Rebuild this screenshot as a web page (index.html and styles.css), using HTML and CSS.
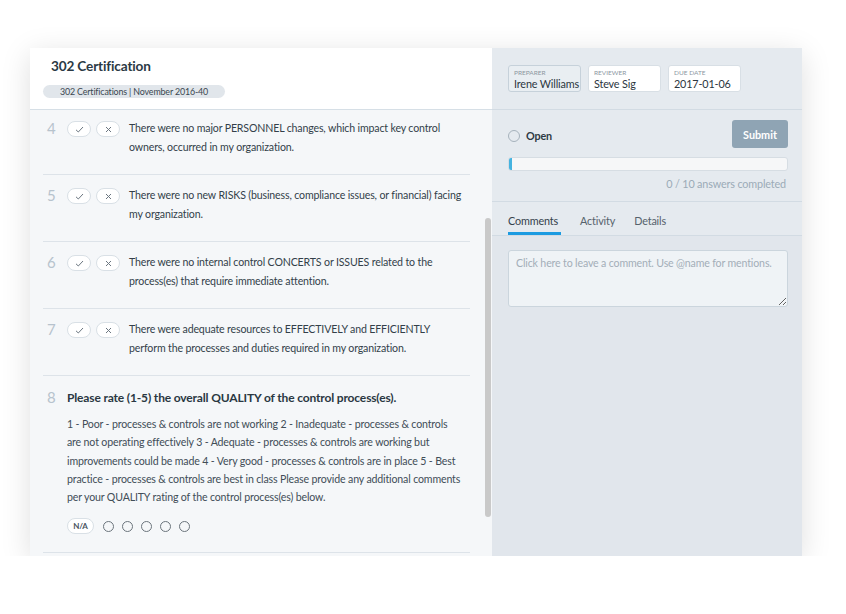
FILE: index.html
```html
<!DOCTYPE html>
<html lang="en">
<head>
  <meta charset="UTF-8" />
  <title>302 Certification</title>
  <link rel="stylesheet" href="styles.css">
</head>
<body>
  <div class="card">
    <div class="survey">
      <div class="survey-head">
        <h1>302 Certification</h1>
        <span class="chip">302 Certifications | November 2016-40</span>
      </div>
      <div class="questions">
        <div class="q first">
          <span class="num">4</span>
          <span class="yesno">
            <span class="pill"><svg width="9" height="7" viewBox="0 0 9 7"><path d="M1 3.8 L3.3 6 L8 1" fill="none" stroke="#6b7680" stroke-width="1"/></svg></span>
            <span class="pill"><svg width="7" height="7" viewBox="0 0 7 7"><path d="M1 1 L6 6 M6 1 L1 6" fill="none" stroke="#6b7680" stroke-width="1"/></svg></span>
          </span>
          <p>There were no major PERSONNEL changes, which impact key control owners, occurred in my organization.</p>
        </div>
        <div class="q">
          <span class="num">5</span>
          <span class="yesno">
            <span class="pill"><svg width="9" height="7" viewBox="0 0 9 7"><path d="M1 3.8 L3.3 6 L8 1" fill="none" stroke="#6b7680" stroke-width="1"/></svg></span>
            <span class="pill"><svg width="7" height="7" viewBox="0 0 7 7"><path d="M1 1 L6 6 M6 1 L1 6" fill="none" stroke="#6b7680" stroke-width="1"/></svg></span>
          </span>
          <p>There were no new RISKS (business, compliance issues, or financial) facing my organization.</p>
        </div>
        <div class="q">
          <span class="num">6</span>
          <span class="yesno">
            <span class="pill"><svg width="9" height="7" viewBox="0 0 9 7"><path d="M1 3.8 L3.3 6 L8 1" fill="none" stroke="#6b7680" stroke-width="1"/></svg></span>
            <span class="pill"><svg width="7" height="7" viewBox="0 0 7 7"><path d="M1 1 L6 6 M6 1 L1 6" fill="none" stroke="#6b7680" stroke-width="1"/></svg></span>
          </span>
          <p>There were no internal control CONCERTS or ISSUES related to the process(es) that require immediate attention.</p>
        </div>
        <div class="q">
          <span class="num">7</span>
          <span class="yesno">
            <span class="pill"><svg width="9" height="7" viewBox="0 0 9 7"><path d="M1 3.8 L3.3 6 L8 1" fill="none" stroke="#6b7680" stroke-width="1"/></svg></span>
            <span class="pill"><svg width="7" height="7" viewBox="0 0 7 7"><path d="M1 1 L6 6 M6 1 L1 6" fill="none" stroke="#6b7680" stroke-width="1"/></svg></span>
          </span>
          <p>There were adequate resources to EFFECTIVELY and EFFICIENTLY perform the processes and duties required in my organization.</p>
        </div>
        <div class="q rate">
          <span class="num">8</span>
          <div class="rate-body">
            <h2>Please rate (1-5) the overall QUALITY of the control process(es).</h2>
            <p>1 - Poor - processes &amp; controls are not working 2 - Inadequate - processes &amp; controls are not operating effectively 3 - Adequate - processes &amp; controls are working but improvements could be made 4 - Very good - processes &amp; controls are in place 5 - Best practice - processes &amp; controls are best in class Please provide any additional comments per your QUALITY rating of the control process(es) below.</p>
            <div class="scale">
              <span class="na">N/A</span>
              <span class="dot"></span>
              <span class="dot"></span>
              <span class="dot"></span>
              <span class="dot"></span>
              <span class="dot"></span>
            </div>
          </div>
        </div>
        <div class="thumb"></div>
      </div>
    </div>

    <div class="side">
      <div class="people">
        <div class="field active"><span class="label">Preparer</span><span class="value">Irene Williams</span></div>
        <div class="field"><span class="label">Reviewer</span><span class="value">Steve Sig</span></div>
        <div class="field"><span class="label">Due Date</span><span class="value">2017-01-06</span></div>
      </div>
      <div class="status">
        <div class="status-row">
          <span class="open"><span class="radio"></span>Open</span>
          <button class="submit">Submit</button>
        </div>
        <div class="progress"><span class="bar"></span></div>
        <div class="count">0 / 10 answers completed</div>
      </div>
      <div class="tabs">
        <span class="tab current">Comments</span>
        <span class="tab">Activity</span>
        <span class="tab">Details</span>
      </div>
      <div class="comments">
        <textarea class="comment-box" placeholder="Click here to leave a comment. Use @name for mentions."></textarea>
      </div>
    </div>
  </div>
</body>
</html>
```

FILE: styles.css
```css
body {
  margin: 0;
  background: #fff;
  font-family: Lato, "Open Sans", sans-serif;
  color: #34414c;
  letter-spacing: -0.15px;
}
.card {
  display: flex;
  width: 772px;
  height: 508px;
  margin: 48px 0 0 30px;
  box-shadow: 0 6px 28px rgba(0, 0, 0, 0.13);
  overflow: hidden;
}

/* left: questions */
.survey {
  width: 462px;
  display: flex;
  flex-direction: column;
  background: #f5f7f9;
}
.survey-head {
  height: 61px;
  background: #fff;
  border-bottom: 1px solid #d6dfe6;
  padding: 0 0 0 13px;
}
.survey-head h1 {
  margin: 9px 0 0 8px;
  font-size: 13.6px;
  font-weight: 700;
  color: #2b3944;
  line-height: 18px;
}
.chip {
  display: inline-block;
  margin-top: 10px;
  height: 13px;
  line-height: 13px;
  width: 182px;
  text-align: center;
  border-radius: 7px;
  background: #e1e6eb;
  font-size: 8.9px;
  color: #3a4650;
}
.questions {
  position: relative;
  flex: 1;
  overflow: hidden;
}
.q {
  display: flex;
  align-items: flex-start;
  margin: 0 22px 0 13px;
  padding: 11px 0 18px;
  border-bottom: 1px solid #dde3e9;
}
.q.first {
  padding-top: 9px;
}
.num {
  width: 24px;
  padding-left: 4px;
  box-sizing: border-box;
  font-size: 15px;
  line-height: 18px;
  letter-spacing: 0;
  color: #b7c3cd;
}
.yesno {
  display: flex;
  gap: 5px;
  margin: 2px 9px 0 0;
}
.pill {
  display: flex;
  align-items: center;
  justify-content: center;
  width: 22px;
  height: 14px;
  border: 1px solid #d9e0e6;
  border-radius: 8px;
  background: #fff;
}
.q p {
  flex: 1;
  margin: 0;
  padding-right: 7px;
  font-size: 10.6px;
  line-height: 18.5px;
  color: #333f49;
}
.q.rate {
  padding: 12px 0 18px;
}
.rate .num {
  line-height: 19px;
}
.rate-body {
  flex: 1;
}
.rate-body h2 {
  margin: 0;
  font-size: 12px;
  line-height: 19px;
  font-weight: 700;
  color: #2a3842;
}
.rate-body p {
  margin: 8px 0 0;
  font-size: 10.6px;
  line-height: 18.3px;
  color: #414d57;
}
.scale {
  display: flex;
  align-items: center;
  gap: 8px;
  margin-top: 12px;
}
.na {
  width: 25px;
  height: 14px;
  line-height: 14px;
  text-align: center;
  border: 1px solid #d9e0e6;
  border-radius: 8px;
  background: #fff;
  font-size: 8px;
  font-weight: 700;
  color: #4a5560;
  margin-right: 1px;
}
.dot {
  width: 9px;
  height: 9px;
  border: 1.3px solid #6b747c;
  border-radius: 50%;
}
.thumb {
  position: absolute;
  left: 455px;
  top: 108px;
  width: 6px;
  height: 299px;
  border-radius: 3px;
  background: #c9c9c9;
}

/* right: details */
.side {
  width: 310px;
  display: flex;
  flex-direction: column;
  background: #e5eaef;
}
.people {
  display: flex;
  gap: 7px;
  padding: 17px 0 0 16px;
  box-sizing: border-box;
  height: 62px;
  border-bottom: 1px solid #d2dbe3;
}
.field {
  display: flex;
  flex-direction: column;
  width: 73px;
  height: 27px;
  box-sizing: border-box;
  padding: 3px 0 0 5px;
  background: #fff;
  border: 1px solid #d8dfe5;
  border-radius: 3px;
  white-space: nowrap;
}
.field.active {
  background: #e9eef2;
  border-color: #c6d1da;
}
.label {
  font-size: 6.5px;
  line-height: 7px;
  letter-spacing: 0;
  text-transform: uppercase;
  color: #8c979f;
}
.value {
  font-size: 10.8px;
  line-height: 14px;
  margin-top: 1px;
  color: #2b3640;
}
.status {
  padding: 10px 14px 0 16px;
  height: 92px;
  box-sizing: border-box;
  border-bottom: 1px solid #d2dbe3;
}
.status-row {
  display: flex;
  justify-content: space-between;
  align-items: center;
}
.open {
  display: flex;
  align-items: center;
  gap: 6px;
  margin-top: 3px;
  font-size: 10.8px;
  font-weight: 700;
  color: #2e3a44;
}
.radio {
  width: 10px;
  height: 10px;
  border: 1.3px solid #a6b2bc;
  border-radius: 50%;
}
.submit {
  width: 56px;
  height: 28px;
  border: none;
  border-radius: 3px;
  background: #8fa4b4;
  color: #fff;
  font-family: Lato, sans-serif;
  font-size: 10.8px;
  font-weight: 700;
  padding: 0;
}
.progress {
  margin-top: 9px;
  height: 14px;
  box-sizing: border-box;
  border: 1px solid #d6dde3;
  border-radius: 3px;
  background: #f6f7f8;
  overflow: hidden;
}
.bar {
  display: block;
  width: 3px;
  height: 100%;
  background: #45b3e0;
}
.count {
  text-align: right;
  margin-top: 6px;
  padding-right: 2px;
  font-size: 10.8px;
  line-height: 14px;
  color: #9babb7;
}
.tabs {
  display: flex;
  gap: 19px;
  padding: 0 0 0 16px;
  height: 33px;
  border-bottom: 1px solid #d2dbe3;
}
.tab {
  padding-top: 12px;
  font-size: 10.8px;
  line-height: 14px;
  color: #56626c;
  box-sizing: border-box;
}
.tab.current {
  color: #34414b;
  width: 53px;
  border-bottom: 3px solid #1c9be1;
}
.comments {
  flex: 1;
  padding: 14px 14px 0 16px;
  background: #e1e6ec;
}
.comment-box {
  display: block;
  width: 100%;
  height: 57px;
  margin: 0;
  box-sizing: border-box;
  padding: 5px 7px;
  border: 1px solid #cbd5dd;
  border-radius: 3px;
  background: #eff3f6;
  font-family: Lato, sans-serif;
  font-size: 10.6px;
  letter-spacing: -0.15px;
  line-height: 14px;
  color: #34414c;
  outline: none;
}
.comment-box::placeholder {
  color: #a3aeb8;
}
```
